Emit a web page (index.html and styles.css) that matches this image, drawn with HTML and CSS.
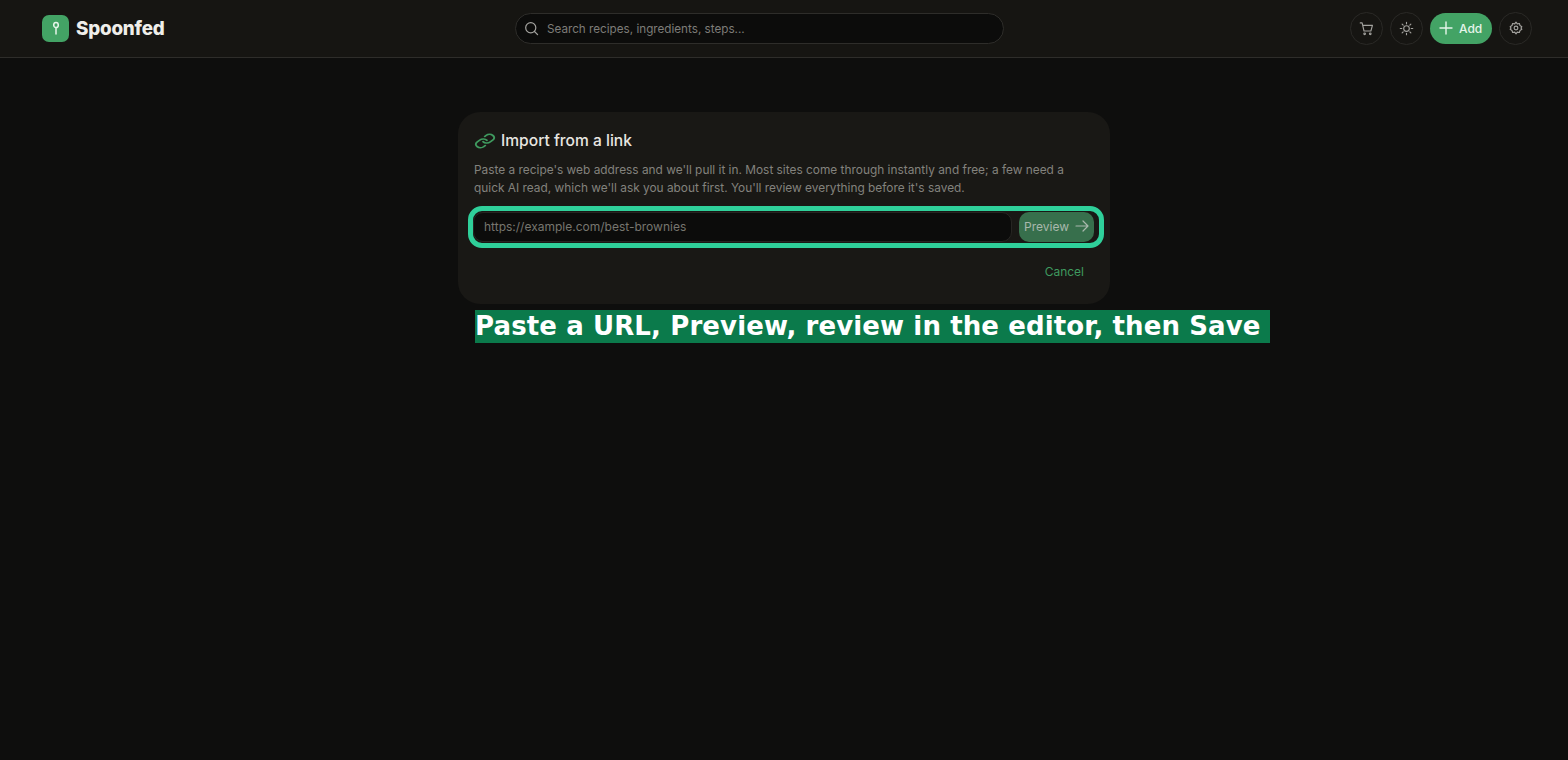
FILE: index.html
```html
<!DOCTYPE html>
<html>
    <head>
        <meta charset="utf-8">
        <title>Spoonfed</title>
        <link rel="stylesheet" href="styles.css">
    </head>
    <body>
        <header class="topbar">
            <div class="brand">
                <span class="brand_mark">
                    <svg width="14" height="18" viewBox="0 0 14 18" fill="none" stroke="#e6f5ea" stroke-width="1.500" stroke-linecap="round">
                        <ellipse cx="7" cy="6" rx="2.300" ry="2.600"/>
                        <path d="M7 9v6"/>
                    </svg>
                </span>
                <span class="brand_name">Spoonfed</span>
            </div>
            <div class="search">
                <svg width="15" height="15" viewBox="0 0 16 16" fill="none" stroke="#a3a29e" stroke-width="1.300" stroke-linecap="round">
                    <circle cx="7.200" cy="7.200" r="5.400"/>
                    <path d="M11.200 11.200L14.500 14.500"/>
                </svg>
                <span class="search_text">Search recipes, ingredients, steps...</span>
            </div>
            <div class="actions">
                <span class="round_btn">
                    <svg width="15" height="15" viewBox="0 0 24 24" fill="none" stroke="#a3a29e" stroke-width="1.800" stroke-linecap="round" stroke-linejoin="round">
                        <circle cx="9" cy="20.500" r="1.300"/>
                        <circle cx="18" cy="20.500" r="1.300"/>
                        <path d="M2 3h3l3 13h11l2.500-9H6"/>
                    </svg>
                </span>
                <span class="round_btn">
                    <svg width="15" height="15" viewBox="0 0 24 24" fill="none" stroke="#a3a29e" stroke-width="1.800" stroke-linecap="round">
                        <circle cx="12" cy="12" r="4.500"/>
                        <path d="M12 2v2.500M12 19.500V22M2 12h2.500M19.500 12H22M5 5l1.700 1.700M17.300 17.300L19 19M5 19l1.700-1.700M17.300 6.700L19 5"/>
                    </svg>
                </span>
                <span class="add_btn">
                    <svg width="14" height="14" viewBox="0 0 14 14" fill="none" stroke="#e6f5ea" stroke-width="1.400" stroke-linecap="round">
                        <path d="M7 1v12M1 7h12"/>
                    </svg>
                    Add
                </span>
                <span class="round_btn">
                    <svg width="14" height="14" viewBox="0 0 24 24" fill="none" stroke="#a3a29e" stroke-width="2" stroke-linejoin="round">
                        <circle cx="12" cy="12" r="3.200"/>
                        <path d="M12 2l2.200 2.900 3.600-.6 1.100 3.500 3.100 1.900-1.400 2.300 1.400 2.300-3.100 1.900-1.100 3.500-3.600-.6L12 22l-2.200-2.900-3.600.6-1.100-3.500-3.100-1.900L3.400 12 2 9.700l3.100-1.900 1.100-3.500 3.600.6z"/>
                    </svg>
                </span>
            </div>
        </header>

        <main class="content">
            <section class="card">
                <h2 class="card_title">
                    <svg width="22" height="16" viewBox="0 0 24 24" preserveAspectRatio="none" fill="none" stroke="#3f9a5f" stroke-width="2.300" stroke-linecap="round" stroke-linejoin="round">
                        <path d="M10 13a5 5 0 0 0 7.540.54l3-3a5 5 0 0 0-7.070-7.070l-1.720 1.710"/>
                        <path d="M14 11a5 5 0 0 0-7.540-.54l-3 3a5 5 0 0 0 7.070 7.070l1.710-1.710"/>
                    </svg>
                    Import from a link
                </h2>
                <p class="card_text">Paste a recipe's web address and we'll pull it in. Most sites come through instantly and free; a few need a quick AI read, which we'll ask you about first. You'll review everything before it's saved.</p>
                <div class="url_row">
                    <div class="url_input">https://example.com/best-brownies</div>
                    <span class="preview_btn">
                        Preview
                        <svg width="14" height="12" viewBox="0 0 14 12" fill="none" stroke="#a9b8ad" stroke-width="1.200" stroke-linecap="round" stroke-linejoin="round">
                            <path d="M1 6h12M8 1l5 5-5 5"/>
                        </svg>
                    </span>
                </div>
                <div class="card_foot">
                    <span class="cancel">Cancel</span>
                </div>
            </section>
            <div class="caption_row">
                <span class="caption">Paste a URL, Preview, review in the editor, then Save&nbsp;</span>
            </div>
        </main>
    </body>
</html>
```

FILE: styles.css
```css
*{
    box-sizing: border-box;
}
html, body{
    height: 100%;
}
body{
    margin: 0; background-color: #0e0e0d; color: #e8e6e1; font-family: "Inter", "Liberation Sans", sans-serif;
    overflow: hidden;
}

.topbar{
    display: flex; align-items: center; height: 58px; padding: 0 36px 1px 42px;
    background-color: #161512; border-bottom: 1px solid #2e2d2a;
}
.brand{
    display: flex; align-items: center; gap: 7px; width: 473px;
}
.brand_mark{
    display: flex; align-items: center; justify-content: center; width: 27px; height: 27px; border-radius: 7px;
    background-color: #43a365;
}
.brand_name{
    font-size: 18.800px; font-weight: 800; letter-spacing: -0.200px; color: #efeeea;
}

.search{
    display: flex; align-items: center; gap: 8px; width: 489px; height: 31px; padding: 0 8px;
    background-color: #0c0c0b; border: 1px solid #2e2d2a; border-radius: 16px;
}
.search_text{
    font-size: 11.700px; color: #7d7c78; line-height: 15px; padding-top: 2px;
}

.actions{
    display: flex; align-items: center; gap: 7px; margin-left: auto;
}
.round_btn{
    display: flex; align-items: center; justify-content: center; width: 33px; height: 33px; border-radius: 50%;
    border: 1px solid #2a2926;
}
.add_btn{
    display: flex; align-items: center; gap: 6px; height: 31px; width: 62px; padding: 0 0 0 9px; border-radius: 16px;
    background-color: #43a365; color: #e6f5ea; font-size: 12px; font-weight: 500;
}

.content{
    width: 652px; margin: 54px auto 0;
}
.card{
    height: 192px; padding: 18px 16px 0; background-color: #191815; border-radius: 22px;
}
.card_title{
    display: flex; align-items: center; gap: 5px; margin: 0; height: 21px;
    font-size: 15.600px; font-weight: 500; color: #e8e6e1;
}
.card_text{
    margin: 10px 0 0; font-size: 11.880px; line-height: 18px; color: #83827d;
}
.url_row{
    display: flex; align-items: center; justify-content: space-between; height: 42px; width: 636px; margin: 9px 0 0 -6px;
    padding: 0 4px 0 0; border: 5px solid #2fd09a; border-radius: 14px; background-color: #191815;
}
.url_input{
    width: 539px; height: 30px; padding: 0 10px; line-height: 28px; font-size: 12px; color: #77766f;
    background-color: #0c0c0b; border: 1px solid #262522; border-radius: 10px;
}
.preview_btn{
    display: flex; align-items: center; gap: 6px; height: 30px; width: 75px; padding: 0 5px 2px; margin-right: 1px;
    border-radius: 10px; background-color: #376f4c; color: #a9b8ad; font-size: 12px;
}
.card_foot{
    display: flex; justify-content: flex-end; margin: 16px 10px 0 0;
}
.cancel{
    font-size: 12px; color: #3f9a5f; line-height: 16px;
}

.caption_row{
    margin: 6px 0 0 17px; white-space: nowrap; height: 33px;
}
.caption{
    display: inline-block; height: 33px; line-height: 33px; background-color: #0b7a4b;
    color: #fff; font-family: "DejaVu Sans", sans-serif; font-size: 26px; font-weight: 700;
    letter-spacing: 0.115px;
}
```
